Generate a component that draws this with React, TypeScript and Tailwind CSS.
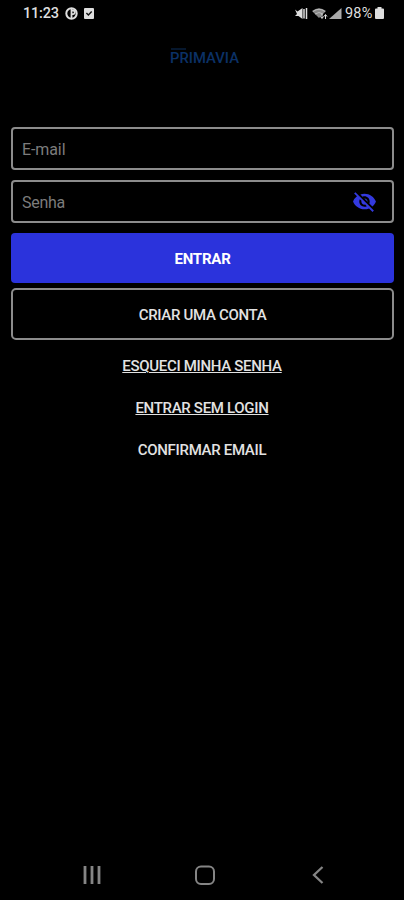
import { useState } from "react";
import { MdVisibility, MdVisibilityOff } from "react-icons/md";

const links = [
  { label: "ESQUECI MINHA SENHA", underline: true },
  { label: "ENTRAR SEM LOGIN", underline: true },
  { label: "CONFIRMAR EMAIL", underline: false },
];

function StatusBar() {
  return (
    <header className="flex h-[27px] shrink-0 items-center pr-5 pl-[23px] text-[#dedede]">
      <span className="w-[36px] pt-px text-[14.5px] leading-5 font-medium tracking-[-0.2px]">11:23</span>
      <svg className="ml-[6px]" width="13" height="13" viewBox="0 0 13 13">
        <circle cx="6.5" cy="6.5" r="5.2" fill="none" stroke="currentColor" strokeWidth="2" />
        <path d="M6.500 1v10.500M6.500 3.500h1.500a1.700 1.700 0 0 1 0 3.600h-1.500" fill="none" stroke="currentColor" strokeWidth="1.800" />
      </svg>
      <svg className="ml-[6px]" width="10" height="13" viewBox="0 0 10 13">
        <rect y="1" width="10" height="11" rx="1" fill="currentColor" />
        <path d="M2.4 6l2 2 3.3-3.4" fill="none" stroke="#111" strokeWidth="1.4" />
      </svg>

      <div className="ml-auto flex items-center">
        <svg width="13" height="13" viewBox="0 0 13 13">
          <path d="M0 2.500l2.500 2L7.500 1v11L3.500 9H0l2-2z" fill="currentColor" />
          <path d="M9 2v9.500M11.500 1v11" stroke="currentColor" strokeWidth="1.5" />
        </svg>
        <svg className="ml-[4px]" width="16" height="13" viewBox="0 0 16 13">
          <path d="M0 4Q7-1.500 14 4L7 11z" fill="#888" />
          <path d="M1 4.500Q7 0 13 4.500M3 7Q7 4 11 7" fill="none" stroke="#bbb" strokeWidth="1" />
          <path d="M10 7v4M8.500 9.500L10 11.500l1.500-2M13.500 12V8M12 9.500l1.500-2 1.500 2" fill="none" stroke="currentColor" strokeWidth="1" />
        </svg>
        <svg className="ml-[1px]" width="13" height="13" viewBox="0 0 13 13">
          <path d="M0 12L12.500 1v11z" fill="#aaa" />
        </svg>
        <span className="ml-[3px] w-[28px] pt-px text-[14.5px] leading-5 tracking-[0.2px]">98%</span>
        <svg className="ml-[2px]" width="9" height="13" viewBox="0 0 9 13">
          <path d="M2.500 0h4v1.500H8a1 1 0 0 1 1 1V11a1 1 0 0 1-1 1H1a1 1 0 0 1-1-1V2.500a1 1 0 0 1 1-1h1.500z" fill="currentColor" />
        </svg>
      </div>
    </header>
  );
}

function Logo() {
  return (
    <div className="mt-[18px] flex h-[22px] shrink-0 justify-center">
      <svg width="80" height="22" viewBox="0 0 80 22">
        <path d="M9 4h15" stroke="#081f3d" strokeWidth="1.500" />
        <text x="8" y="17.500" fontSize="15" fontWeight="500" fill="#0b3166" textLength="69" lengthAdjust="spacingAndGlyphs">
          PRIMAVIA
        </text>
      </svg>
    </div>
  );
}

export default function App() {
  const [showPassword, setShowPassword] = useState(false);

  return (
    <div className="flex h-[900px] w-[404px] flex-col overflow-hidden bg-black font-['Roboto',sans-serif] text-[#e2e2e2]">
      <StatusBar />
      <Logo />

      <form className="mt-[60px] flex flex-col pr-[10px] pl-[11px]" onSubmit={(e) => e.preventDefault()}>
        <input
          type="email"
          placeholder="E-mail"
          className="h-[43px] rounded-[4px] border-2 border-[#8c8c8c] bg-black px-[9px] pt-[2px] text-[16px] tracking-[-0.1px] outline-none placeholder:text-[#7c7c7c]"
        />
        <div className="mt-[10px] flex h-[43px] items-center rounded-[4px] border-2 border-[#8c8c8c] pr-[15px] pl-[9px]">
          <input
            type={showPassword ? "text" : "password"}
            placeholder="Senha"
            className="min-w-0 flex-1 bg-black pt-[2px] text-[16px] tracking-[-0.3px] outline-none placeholder:text-[#7c7c7c]"
          />
          <button type="button" aria-label="Mostrar senha" onClick={() => setShowPassword(!showPassword)} className="text-[#3339df]">
            {showPassword ? <MdVisibility size={25} /> : <MdVisibilityOff size={25} />}
          </button>
        </div>

        <button type="submit" className="mt-[10px] h-[50px] rounded-[4px] bg-[#2b33dc] pt-[2px] text-[15px] font-bold tracking-[-0.2px] text-white">
          ENTRAR
        </button>
        <button type="button" className="mt-[5px] h-[52px] rounded-[5px] border-2 border-[#8c8c8c] pt-[2px] text-[15px] font-medium tracking-[-0.32px]">
          CRIAR UMA CONTA
        </button>
      </form>

      <nav className="mt-[16px] flex flex-col items-center gap-[22px] text-[15px] leading-5 font-medium tracking-[-0.31px]">
        {links.map((link) => (
          <a key={link.label} href="#" className={link.underline ? "underline underline-offset-1" : ""}>
            {link.label}
          </a>
        ))}
      </nav>

      {/* Android navigation */}
      <footer className="mt-auto flex h-[50px] items-center pl-[82px] text-[#858585]">
        <svg width="20" height="20" viewBox="0 0 20 20">
          <path d="M3 1v18M10 1v18M17 1v18" stroke="currentColor" strokeWidth="2.800" />
        </svg>
        <svg className="ml-[93px]" width="20" height="20" viewBox="0 0 20 20">
          <rect x="1" y="1.500" width="18" height="17.500" rx="5" fill="none" stroke="currentColor" strokeWidth="2" />
        </svg>
        <svg className="ml-[97px]" width="12" height="20" viewBox="0 0 12 20">
          <path d="M10.500 2L2 10l8.500 8" fill="none" stroke="currentColor" strokeWidth="2.300" />
        </svg>
      </footer>
    </div>
  );
}
